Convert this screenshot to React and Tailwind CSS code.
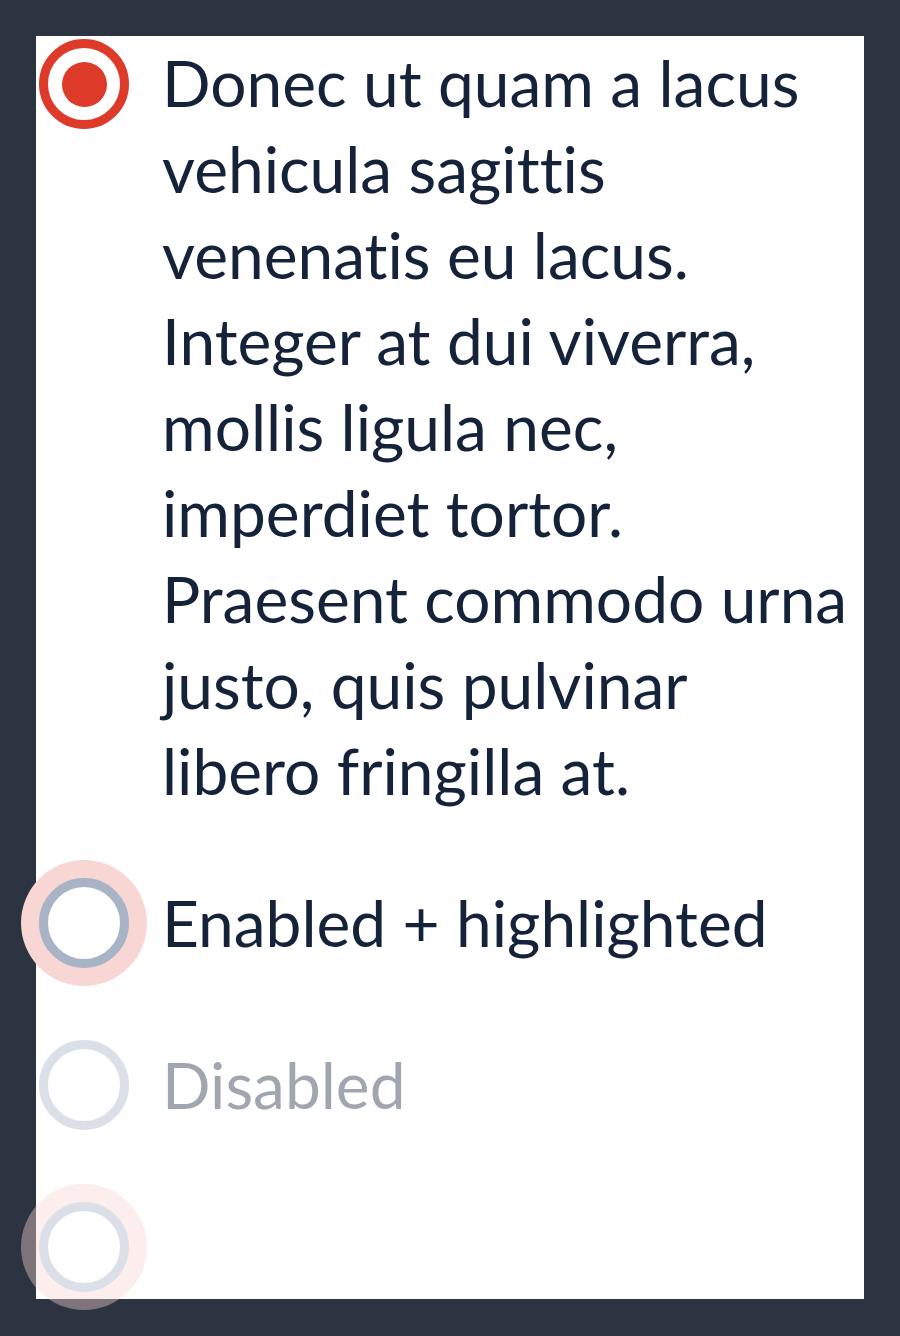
import React from 'react';

const font = { fontFamily: 'Lato, "Noto Sans", sans-serif' };

function Radio({ checked, highlighted, disabled }) {
  return (
    <div className={disabled ? 'shrink-0 opacity-40' : 'shrink-0'}>
      <div
        className={
          'w-[90px] h-[90px] rounded-full border-[9px] flex items-center justify-center bg-white ' +
          (checked ? 'border-[#dd3a29] ' : 'border-[#a8b4c6] ') +
          (highlighted ? 'shadow-[0_0_0_18px_#f8d6d4]' : '')
        }
      >
        {checked && <div className="w-[45px] h-[45px] rounded-full bg-[#dd3a29]" />}
      </div>
    </div>
  );
}

export default function App() {
  return (
    <div className="min-h-screen bg-[#2c3441] pt-[36px] pl-[36px]" style={font}>
      <div className="w-[828px] bg-white pt-[3px] pl-[3px] pb-[7px] text-[#15233a] text-[64px] leading-[86px] [font-variant-ligatures:none]">
        <div className="flex items-start gap-[33px]">
          <Radio checked />
          <p className="pt-[1px] w-[688px]">
            Donec ut quam a lacus vehicula sagittis venenatis eu lacus. Integer at dui viverra,
            mollis ligula nec, imperdiet tortor. Praesent commodo urna justo, quis pulvinar
            libero fringilla at.
          </p>
        </div>
        <div className="mt-[64px] flex items-center gap-[33px]">
          <Radio highlighted />
          <span>Enabled + highlighted</span>
        </div>
        <div className="mt-[72px] flex items-center gap-[33px]">
          <Radio disabled />
          <span className="opacity-40">Disabled</span>
        </div>
        <div className="mt-[72px] flex items-center gap-[33px]">
          <Radio highlighted disabled />
        </div>
      </div>
    </div>
  );
}
